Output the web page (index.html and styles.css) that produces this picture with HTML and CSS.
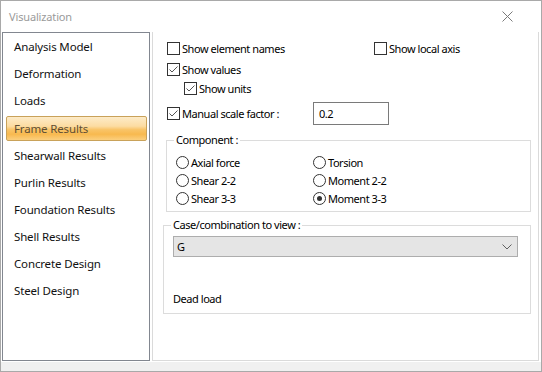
FILE: index.html
```html
<!DOCTYPE html>
<html lang="en">
<head>
  <meta charset="UTF-8">
  <title>Visualization</title>
  <link rel="stylesheet" href="styles.css">
</head>
<body>

  <div class="window">
    <!-- Title bar -->
    <div class="titlebar">
      <span class="title">Visualization</span>
      <svg class="close" width="11" height="11" viewBox="0 0 11 11">
        <path d="M0.5 0.5 L10.5 10.5 M10.5 0.5 L0.5 10.5" stroke="#7a7a7a" stroke-width="1" fill="none"/>
      </svg>
    </div>

    <div class="main">
      <!-- Left navigation -->
      <ul class="nav">
        <li>Analysis Model</li>
        <li>Deformation</li>
        <li>Loads</li>
        <li class="active">Frame Results</li>
        <li>Shearwall Results</li>
        <li>Purlin Results</li>
        <li>Foundation Results</li>
        <li>Shell Results</li>
        <li>Concrete Design</li>
        <li>Steel Design</li>
      </ul>

      <!-- Options panel -->
      <div class="panel">
        <div class="row row-first">
          <label class="check col-wide"><span class="box"></span>Show element names</label>
          <label class="check"><span class="box"></span>Show local axis</label>
        </div>
        <div class="row row-values">
          <label class="check"><span class="box checked"><svg width="11" height="11" viewBox="0 0 11 11"><path d="M1.5 5.5 L4 8 L9.5 2.5" stroke="#555" stroke-width="1" fill="none"/></svg></span>Show values</label>
        </div>
        <div class="row row-units">
          <label class="check"><span class="box checked"><svg width="11" height="11" viewBox="0 0 11 11"><path d="M1.5 5.5 L4 8 L9.5 2.5" stroke="#555" stroke-width="1" fill="none"/></svg></span>Show units</label>
        </div>
        <div class="row row-scale">
          <label class="check col-scale"><span class="box checked"><svg width="11" height="11" viewBox="0 0 11 11"><path d="M1.5 5.5 L4 8 L9.5 2.5" stroke="#555" stroke-width="1" fill="none"/></svg></span>Manual scale factor :</label>
          <div class="textbox">0.2</div>
        </div>

        <!-- Component group -->
        <div class="group group-component">
          <div class="group-title">Component :</div>
          <div class="radios">
            <label class="radio"><span class="dot"></span>Axial force</label>
            <label class="radio"><span class="dot"></span>Torsion</label>
            <label class="radio"><span class="dot"></span>Shear 2-2</label>
            <label class="radio"><span class="dot"></span>Moment 2-2</label>
            <label class="radio"><span class="dot"></span>Shear 3-3</label>
            <label class="radio"><span class="dot on"></span>Moment 3-3</label>
          </div>
        </div>

        <!-- Case group -->
        <div class="group group-case">
          <div class="group-title">Case/combination to view :</div>
          <div class="select">
            <span>G</span>
            <svg width="10" height="6" viewBox="0 0 10 6">
              <path d="M0.5 0.5 L5 5 L9.5 0.5" stroke="#606060" stroke-width="1" fill="none"/>
            </svg>
          </div>
          <div class="case-desc">Dead load</div>
        </div>
      </div>
    </div>

    <div class="footer"></div>
  </div>

</body>
</html>
```

FILE: styles.css
```css
/* Global */
body {
  margin: 0;
  font-family: 'Noto Sans', 'Liberation Sans', sans-serif;
  font-size: 11px;
  color: #000;
  background: #fff;
}

.window {
  width: 542px;
  height: 372px;
  box-sizing: border-box;
  border: 1px solid #a9a9a9;
  background: #fff;
  display: flex;
  flex-direction: column;
}

/* Title bar */
.titlebar {
  height: 30px;
  display: flex;
  align-items: center;
  justify-content: space-between;
  padding: 0 28px 0 8px;
}

.title {
  color: #9a9a9a;
  font-size: 11px;
  letter-spacing: -0.15px;
}

.close {
  margin-top: 1px;
}

/* Main area */
.main {
  display: flex;
  height: 330px;
  padding-top: 1px;
  padding-left: 1px;
  box-sizing: border-box;
}

/* Left navigation */
.nav {
  list-style: none;
  margin: 0;
  padding: 2px 0 0 0;
  width: 148px;
  box-sizing: border-box;
  border: 1px solid #828790;
  display: flex;
  flex-direction: column;
  gap: 3px;
  font-size: 11.5px;
  letter-spacing: -0.15px;
}

.nav li {
  height: 24px;
  line-height: 24px;
  padding-left: 11px;
  color: #111;
}

.nav li.active {
  margin: 0 2px 0 3px;
  padding-left: 7px;
  height: 23px;
  line-height: 23px;
  border: 1px solid #c9a25a;
  border-radius: 2px;
  color: #5f4e33;
  background: linear-gradient(#fdebc8 0%, #fcdca2 40%, #f9c468 55%, #f8b94f 75%, #fbcf7e 100%);
}

/* Options panel */
.panel {
  margin-left: 2px;
  width: 387px;
  box-sizing: border-box;
  border: 1px solid #dadada;
  border-top: none;
  padding-top: 7px;
  letter-spacing: -0.45px;
}

.row {
  display: flex;
  align-items: center;
  height: 18px;
  padding-left: 14px;
}

.row-values {
  margin-top: 3px;
}

.row-units {
  margin-top: 1px;
  padding-left: 31px;
}

.row-scale {
  margin-top: 5px;
  height: 23px;
}

.col-wide {
  width: 207px;
}

.col-scale {
  width: 146px;
}

.check, .radio {
  display: flex;
  align-items: center;
  white-space: nowrap;
}

.box {
  width: 13px;
  height: 13px;
  box-sizing: border-box;
  border: 1px solid #333;
  background: #fff;
  margin-right: 2px;
  display: flex;
  align-items: center;
  justify-content: center;
}

.textbox {
  width: 76px;
  height: 23px;
  box-sizing: border-box;
  border: 1px solid #7a7a7a;
  padding-left: 5px;
  line-height: 21px;
}

/* Group boxes */
.group {
  border: 1px solid #dcdcdc;
  margin-right: 7px;
}

.group-title {
  width: fit-content;
  margin-top: -9px;
  padding: 0 2px;
  background: #fff;
  height: 16px;
  line-height: 16px;
}

.group-component {
  margin-top: 15px;
  margin-left: 13px;
  padding: 0 0 4px 9px;
}

.group-component .group-title {
  margin-left: -2px;
}

.radios {
  margin-top: 5px;
  display: grid;
  grid-template-columns: 137px 1fr;
  grid-auto-rows: 18px;
}

.dot {
  width: 13px;
  height: 13px;
  box-sizing: border-box;
  border: 1px solid #333;
  border-radius: 50%;
  margin-right: 2px;
  display: flex;
  align-items: center;
  justify-content: center;
}

.dot.on::after {
  content: "";
  width: 5px;
  height: 5px;
  border-radius: 50%;
  background: #333;
}

.group-case {
  margin-top: 13px;
  margin-left: 10px;
  height: 89px;
  box-sizing: border-box;
  padding-left: 9px;
}

.group-case .group-title {
  margin-left: -2px;
}

.select {
  margin-top: 3px;
  width: 345px;
  height: 21px;
  box-sizing: border-box;
  border: 1px solid #adadad;
  background: #e5e5e5;
  display: flex;
  align-items: center;
  justify-content: space-between;
  padding: 0 5px 0 3px;
}

.case-desc {
  margin-top: 33px;
  height: 18px;
  line-height: 18px;
}

/* Footer strip */
.footer {
  flex: 1;
  margin-top: 1px;
  background: #f0f0f0;
}
```
